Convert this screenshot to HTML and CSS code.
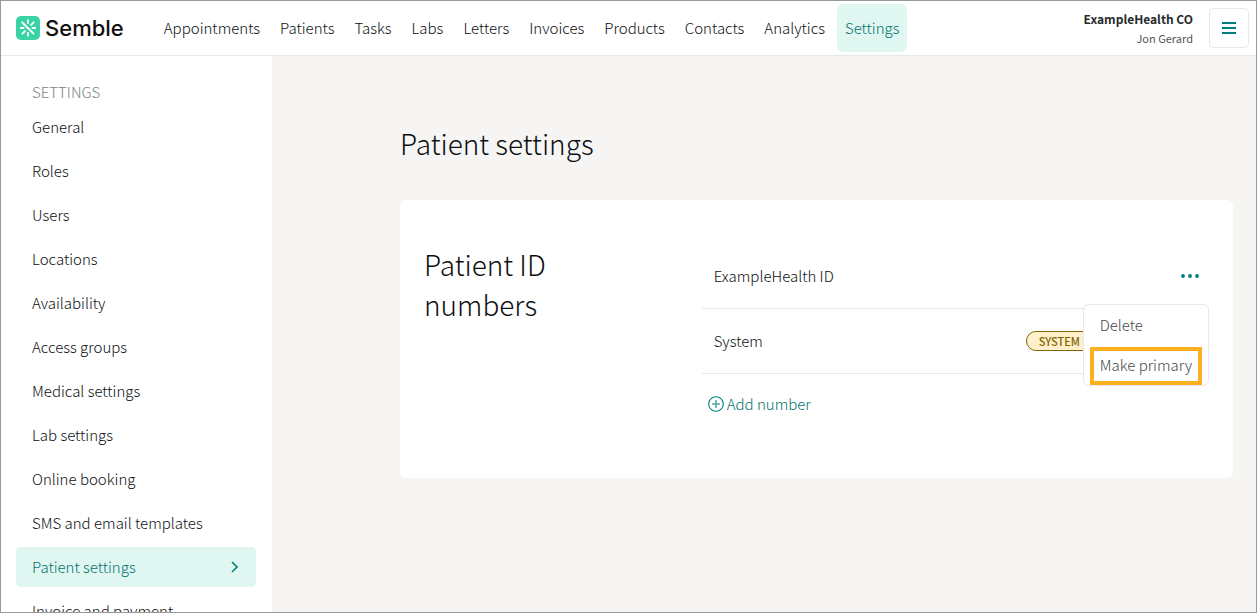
FILE: index.html
```html
<!DOCTYPE html>
<html lang="en">
  <head>
    <meta charset="UTF-8">
    <title>Patient settings - Semble</title>
    <link rel="stylesheet" href="styles.css">
  </head>
  <body>
    <header class="topbar">
      <a class="logo" href="#">
        <svg class="logo-mark" width="24" height="24" viewBox="0 0 24 24" aria-hidden="true">
          <rect width="24" height="24" rx="5" fill="#3ad3a5"/>
          <path d="M6.3 6.5 17.5 17.7M12 4.2v2.8M12 17v2.8M4.8 12h2.8M16.4 12h2.8M17.5 6.5l-2.4 2.4M6.5 17.5l2.4-2.4" stroke="#fff" stroke-width="1.8" stroke-linecap="round" fill="none"/>
        </svg>
        <span class="logo-text">Semble</span>
      </a>
      <nav class="main-nav">
        <a href="#">Appointments</a>
        <a href="#">Patients</a>
        <a href="#">Tasks</a>
        <a href="#">Labs</a>
        <a href="#">Letters</a>
        <a href="#">Invoices</a>
        <a href="#">Products</a>
        <a href="#">Contacts</a>
        <a href="#">Analytics</a>
        <a class="active" href="#">Settings</a>
      </nav>
      <div class="account">
        <div class="practice">ExampleHealth CO</div>
        <div class="user">Jon Gerard</div>
      </div>
      <button class="menu-button" type="button" aria-label="Menu">
        <svg width="14" height="14" viewBox="0 0 14 14">
          <path d="M0 2h14M0 7h14M0 12h14" stroke="#00807d" stroke-width="2"/>
        </svg>
      </button>
    </header>

    <div class="page">
      <aside class="sidebar">
        <h2 class="sidebar-title">SETTINGS</h2>
        <nav class="side-nav">
          <a href="#">General</a>
          <a href="#">Roles</a>
          <a href="#">Users</a>
          <a href="#">Locations</a>
          <a href="#">Availability</a>
          <a href="#">Access groups</a>
          <a href="#">Medical settings</a>
          <a href="#">Lab settings</a>
          <a href="#">Online booking</a>
          <a href="#">SMS and email templates</a>
          <a class="active" href="#">Patient settings
            <svg width="10" height="12" viewBox="0 0 10 12" aria-hidden="true">
              <path d="M2 1l5 5-5 5" stroke="#00807d" stroke-width="1.6" fill="none"/>
            </svg>
          </a>
          <a href="#">Invoice and payment</a>
        </nav>
      </aside>

      <main class="content">
        <h1>Patient settings</h1>
        <section class="card">
          <h2 class="card-title">Patient ID numbers</h2>
          <div class="numbers">
            <div class="number-row">
              <span>ExampleHealth ID</span>
              <button class="more-button" type="button" aria-label="More options">
                <svg width="18" height="4" viewBox="0 0 18 4">
                  <circle cx="2" cy="2" r="1.9" fill="#00807d"/>
                  <circle cx="9" cy="2" r="1.9" fill="#00807d"/>
                  <circle cx="16" cy="2" r="1.9" fill="#00807d"/>
                </svg>
              </button>
              <!-- opened from the three dots, lies over the next row -->
              <div class="dropdown">
                <button type="button">Delete</button>
                <button class="highlight" type="button">Make primary</button>
              </div>
            </div>
            <div class="number-row">
              <span>System</span>
              <span class="badge">SYSTEM</span>
            </div>
            <button class="add-button" type="button">
              <svg width="16" height="16" viewBox="0 0 16 16" aria-hidden="true">
                <circle cx="8" cy="8" r="7.3" fill="none" stroke="#00807d" stroke-width="1.1"/>
                <path d="M8 4v8M4 8h8" stroke="#4da6a4" stroke-width="1.5"/>
              </svg>
              Add number
            </button>
          </div>
        </section>
      </main>
    </div>
  </body>
</html>
```

FILE: styles.css
```css
* {
  box-sizing: border-box;
}

body {
  display: flex;
  flex-direction: column;
  height: 100vh;
  margin: 0;
  overflow: hidden;
  border: 1px solid #999;
  background-color: #fff;
  color: #0c0f12;
  font-family: "Noto Sans CJK SC", "Noto Sans", sans-serif;
  font-size: 15px;
  font-weight: 300;
  line-height: 24px;
}

a {
  color: inherit;
  text-decoration: none;
}

button {
  padding: 0;
  border: none;
  background: none;
  color: inherit;
  font: inherit;
  cursor: pointer;
}

svg {
  display: block;
  flex: none;
}

h1,
h2 {
  margin: 0;
  font-weight: 300;
}

.topbar {
  display: flex;
  align-items: center;
  flex: none;
  height: 55px;
  padding: 0 7px 0 15px;
  border-bottom: 1px solid #e8e8e8;
}

.logo {
  display: flex;
  align-items: center;
  gap: 5px;
  margin-right: 32px;
}

.logo-text {
  color: #111;
  font-family: Inter, "Liberation Sans", sans-serif;
  font-size: 22px;
  font-weight: 500;
}

.main-nav {
  display: flex;
  gap: 4px;
}

.main-nav a {
  padding: 12px 8px;
  border-radius: 6px;
}

.main-nav .active,
.side-nav .active {
  background-color: #e0f7f1;
  color: #007370;
}

.account {
  margin-left: auto;
  text-align: right;
}

.practice {
  color: #282b2d;
  font-size: 12px;
  font-weight: 700;
  line-height: 20px;
}

.user {
  color: #555;
  font-size: 11px;
  font-weight: 400;
  line-height: 18px;
}

.menu-button {
  display: flex;
  align-items: center;
  justify-content: center;
  width: 40px;
  height: 40px;
  margin-left: 16px;
  border: 1px solid #e8e8e8;
  border-radius: 4px;
}

.page {
  display: flex;
  flex: 1;
  min-height: 0;
}

.sidebar {
  flex: none;
  width: 271px;
  padding: 24px 16px 0 15px;
  overflow: hidden;
}

.sidebar-title {
  padding: 0 16px;
  margin-bottom: 3px;
  color: #808484;
  font-size: 15px;
}

.side-nav {
  display: flex;
  flex-direction: column;
  gap: 4px;
}

.side-nav a {
  display: flex;
  align-items: center;
  justify-content: space-between;
  padding: 8px 16px;
  border-radius: 5px;
}

.content {
  flex: 1;
  padding: 67px 23px 0 128px;
  background-color: #f6f5f4;
}

h1 {
  font-size: 28px;
  line-height: 40px;
}

.card {
  display: grid;
  grid-template-columns: 1fr 2fr;
  gap: 24px;
  margin-top: 37px;
  padding: 44px 24px 62px;
  border-radius: 6px;
  background-color: #fff;
}

.card-title {
  padding-right: 64px;
  font-size: 28px;
  line-height: 40px;
}

.number-row {
  display: flex;
  align-items: center;
  justify-content: space-between;
  position: relative;
  height: 65px;
  padding: 0 10px 0 12px;
  border-bottom: 1px solid #e8e8e8;
}

.badge {
  margin-right: 106px;
  padding: 0 12px;
  border: 1px solid #806600;
  border-radius: 10px;
  background-color: #fdf0cb;
  color: #806600;
  font-size: 11px;
  font-weight: 500;
  line-height: 18px;
}

.dropdown {
  display: flex;
  flex-direction: column;
  position: absolute;
  top: 60px;
  right: 0;
  z-index: 1;
  padding: 0 6px;
  border: 1px solid #e8e8e8;
  border-radius: 6px;
  background-color: #fff;
  color: #444949;
}

.dropdown button {
  padding: 8px 10px;
  text-align: left;
}

.dropdown .highlight {
  padding: 2px 6px 4px;
  margin-top: 2px;
  border: 4px solid #fdb01e;
}

.add-button {
  display: flex;
  align-items: center;
  gap: 3px;
  margin: 18px 6px 0;
  color: #007370;
}
```
